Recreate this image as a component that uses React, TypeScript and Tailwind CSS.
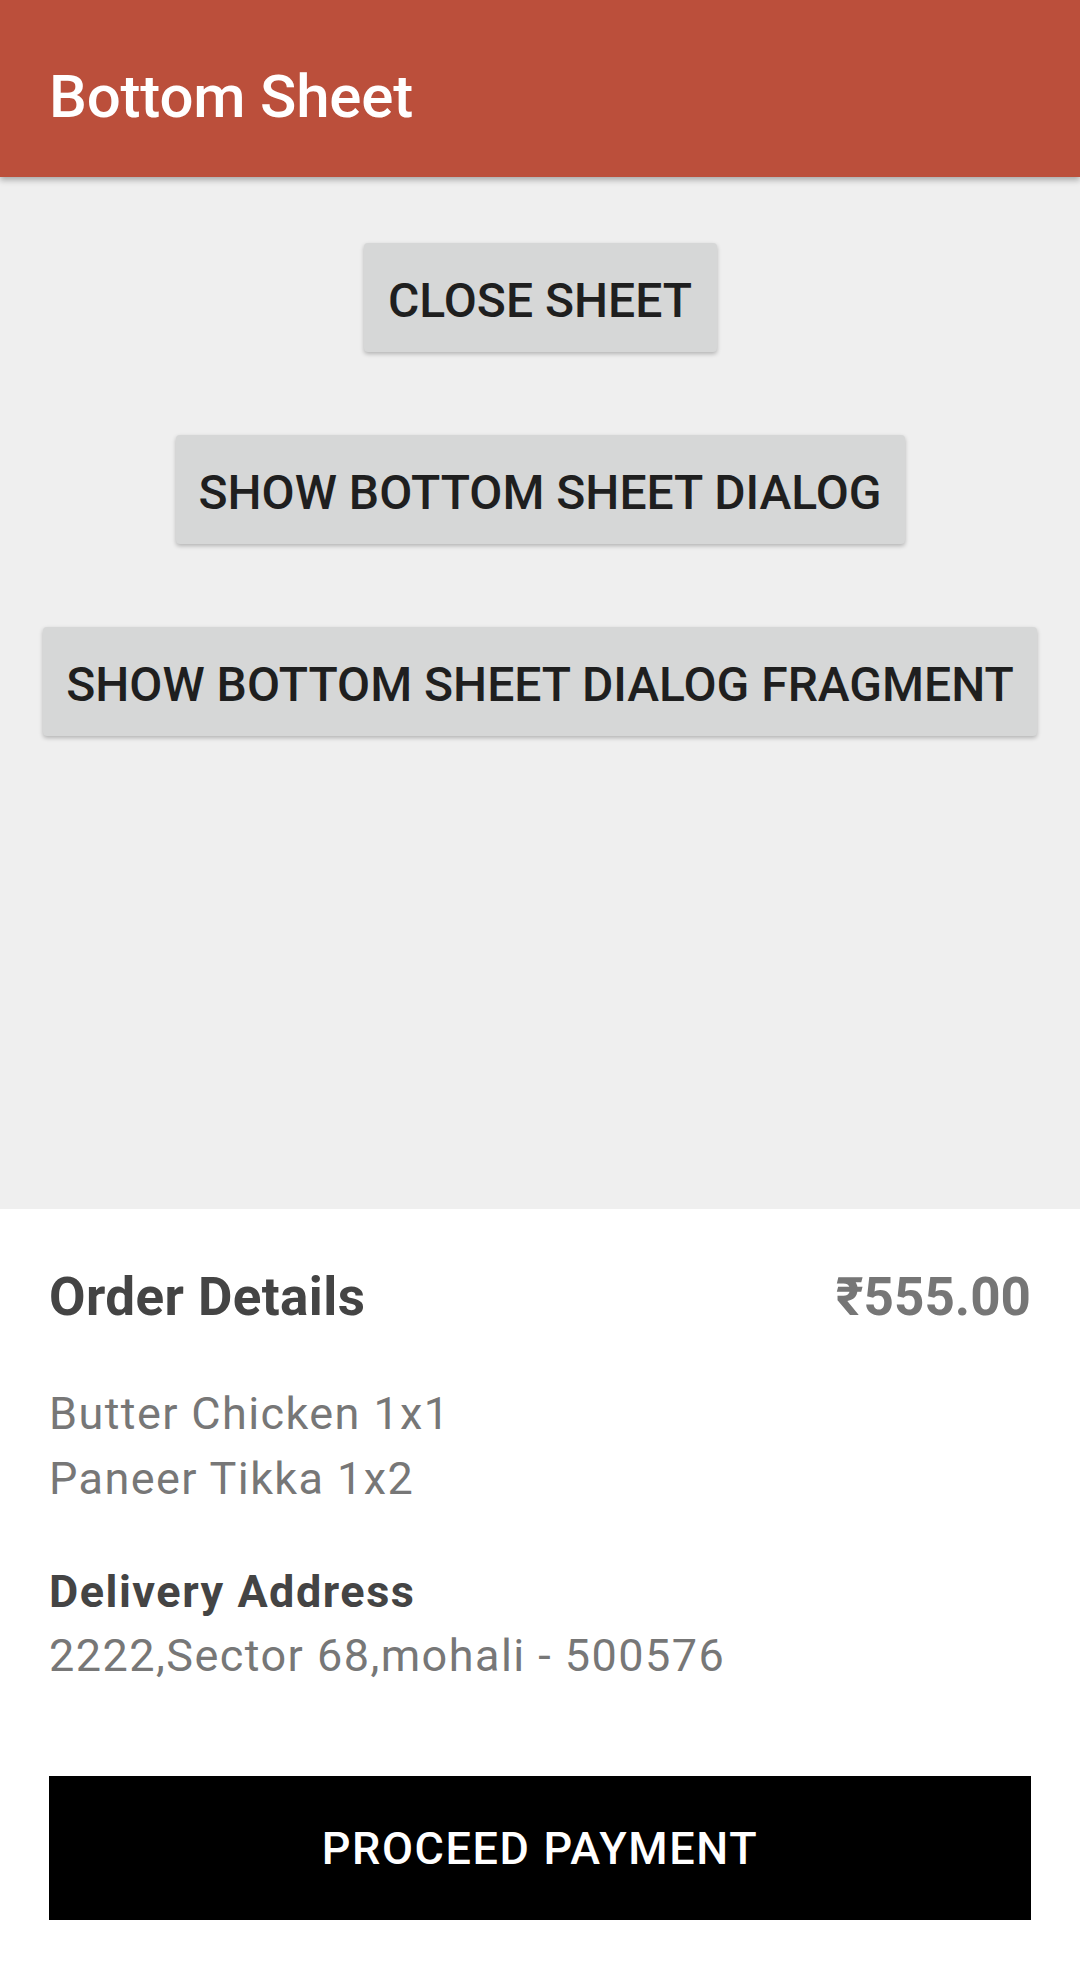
export default function App() {
  const font = { fontFamily: 'Roboto, "Noto Sans", sans-serif' };
  return (
    <div className="w-[1080px] h-[1971px] flex flex-col bg-[#efefef] overflow-hidden" style={font}>
      <div className="relative z-10 h-[177px] shrink-0 bg-[#bb4f3b] pl-[49px] pt-[62px] shadow-[0_3px_6px_rgba(0,0,0,0.3)]">
        <div className="text-[60px] leading-[70px] font-medium text-white tracking-[-0.2px]">Bottom Sheet</div>
      </div>
      <div className="flex-1 flex flex-col items-center pt-[66px] gap-[83px]">
        <button className="w-[353px] h-[109px] pt-[6px] rounded-[4px] bg-[#d6d7d7] text-[#1f1f1f] text-[48px] font-medium shadow-[0_2px_4px_rgba(0,0,0,0.25)]">
          CLOSE SHEET
        </button>
        <button className="w-[729px] h-[109px] pt-[6px] rounded-[4px] bg-[#d6d7d7] text-[#1f1f1f] text-[48px] font-medium shadow-[0_2px_4px_rgba(0,0,0,0.25)]">
          SHOW BOTTOM SHEET DIALOG
        </button>
        <button className="w-[994px] h-[109px] pt-[6px] rounded-[4px] bg-[#d6d7d7] text-[#1f1f1f] text-[48px] font-medium shadow-[0_2px_4px_rgba(0,0,0,0.25)]">
          SHOW BOTTOM SHEET DIALOG FRAGMENT
        </button>
      </div>
      <div className="h-[762px] shrink-0 bg-white px-[49px] pt-[57px]">
        <div className="flex justify-between items-baseline">
          <div className="text-[53px] leading-[62px] font-bold text-[#444444] tracking-[0.4px]">Order Details</div>
          <div className="text-[53px] leading-[62px] font-bold text-[#767676]">₹555.00</div>
        </div>
        <div className="mt-[53px] text-[45px] leading-[65px] text-[#777777] tracking-[1.4px]">
          <div>Butter Chicken 1x1</div>
          <div>Paneer Tikka 1x2</div>
        </div>
        <div className="mt-[49px] text-[45px] leading-[64px]">
          <div className="font-bold text-[#444444] tracking-[1.5px]">Delivery Address</div>
          <div className="text-[#777777] tracking-[1.45px]">2222,Sector 68,mohali - 500576</div>
        </div>
        <button className="mt-[88px] w-full h-[144px] pt-[2px] bg-black text-white text-[45px] font-medium tracking-[1.6px]">
          PROCEED PAYMENT
        </button>
      </div>
    </div>
  );
}
